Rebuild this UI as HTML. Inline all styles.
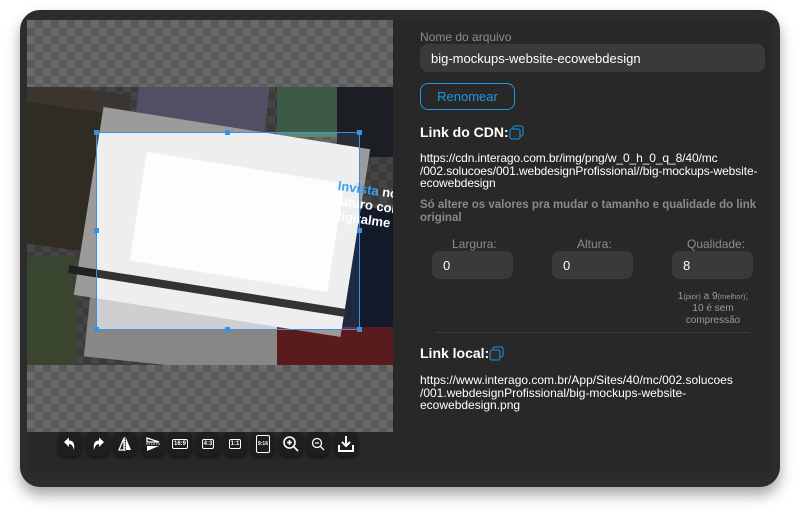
<!DOCTYPE html>
<html><head><meta charset="utf-8"><style>
*{box-sizing:border-box;margin:0;padding:0}
body{width:800px;height:514px;background:#fff;font-family:"Liberation Sans",sans-serif;position:relative;overflow:hidden}
.panel{position:absolute;left:20px;top:10px;width:760px;height:477px;background:#2c2c2c;border-radius:20px;box-shadow:0 8px 14px rgba(0,0,0,.35)}
.inner{position:absolute;left:27px;top:20px;width:746px;height:453px;background:#282828}
.canvas{position:absolute;left:27px;top:20px;width:366px;height:412px;overflow:hidden;
background-color:#6a6a6a;background-image:linear-gradient(45deg,#5a5a5a 25%,transparent 25%,transparent 75%,#5a5a5a 75%),linear-gradient(45deg,#5a5a5a 25%,transparent 25%,transparent 75%,#5a5a5a 75%);background-size:16px 16px;background-position:0 0,8px 8px}
.img{position:absolute;left:0;top:67px;width:366px;height:278px;overflow:hidden}
.b{position:absolute}
.dim{position:absolute;left:0;top:67px;width:366px;height:278px;background:rgba(0,0,0,.35)}
.crop{position:absolute;left:69px;top:112px;width:264px;height:198px;border:1.5px solid #3d8fe6}
.h{position:absolute;width:5px;height:5px;background:#3d8fe6}
.tb{position:absolute;top:432px;height:24px;width:24px;background:#1e1e1e;border-radius:7px;box-shadow:0 2px 3px rgba(0,0,0,.5);display:flex;align-items:center;justify-content:center;color:#fff;font-size:6px;font-weight:bold}
.tb span{border:1.3px solid #fff;border-radius:2px;padding:1px 1px;line-height:6px}
.lbl{position:absolute;color:#8d8d8d;font-size:12px}
.inp{position:absolute;background:#3a3a3c;border-radius:8px;color:#fff;font-size:13px;padding-left:11px;display:flex;align-items:center}
.t{position:absolute;color:#fff;font-size:12px;line-height:12.5px}
.hd{position:absolute;color:#fff;font-size:14px;font-weight:bold}
.cp{display:inline-block;vertical-align:-3px;width:15px;height:15px;position:relative}
</style></head><body>
<div class="panel"></div>
<div class="inner"></div>
<div class="canvas">
 <div class="img">
  <div class="b" style="left:-20px;top:0;width:120px;height:70px;background:#5c5048;transform:rotate(8deg)"></div>
  <div class="b" style="left:-10px;top:20px;width:80px;height:140px;background:#4a4236;transform:rotate(8deg)"></div>
  <div class="b" style="left:-10px;top:170px;width:60px;height:110px;background:#5a6a4a"></div>
  <div class="b" style="left:110px;top:-10px;width:130px;height:60px;background:#7c7a9a;transform:rotate(6deg)"></div>
  <div class="b" style="left:250px;top:-10px;width:60px;height:60px;background:#5c8a6a"></div>
  <div class="b" style="left:310px;top:0;width:60px;height:70px;background:#2a2e36"></div>
  <div class="b" style="left:290px;top:120px;width:90px;height:140px;background:#1c2940;transform:rotate(8deg)"></div>
  <div class="b" style="left:60px;top:210px;width:200px;height:70px;background:#cfcfd2;transform:rotate(6deg)"></div>
  <div class="b" style="left:250px;top:240px;width:120px;height:40px;background:#8a2a30"></div>
  <div class="b" style="left:60px;top:40px;width:270px;height:190px;background:#eeeeee;transform:rotate(9deg)"></div>
  <div class="b" style="left:110px;top:80px;width:200px;height:110px;background:#fdfdfd;transform:rotate(9deg)"></div>
  <div class="b" style="left:40px;top:200px;width:280px;height:8px;background:#333;transform:rotate(9deg)"></div>
 </div>
 <div class="dim" style="height:45px"></div>
 <div class="dim" style="top:112px;width:69px;height:198px"></div>
 <div class="dim" style="top:112px;left:333px;width:33px;height:198px"></div>
 <div class="dim" style="top:310px;height:35px"></div>
 <div style="position:absolute;left:312px;top:158px;color:#fff;font-weight:bold;font-size:13px;transform:rotate(8deg);transform-origin:0 0;line-height:15px;white-space:nowrap"><span style="color:#3aa0e8">Invista</span> no<br>futuro cono<br>digitalme</div>
 <div class="crop"></div>
 <div class="h" style="left:67px;top:110px"></div><div class="h" style="left:198px;top:110px"></div><div class="h" style="left:330px;top:110px"></div>
 <div class="h" style="left:67px;top:208px"></div><div class="h" style="left:330px;top:208px"></div>
 <div class="h" style="left:67px;top:307px"></div><div class="h" style="left:198px;top:307px"></div><div class="h" style="left:330px;top:307px"></div>
</div>
<div class="tb" style="left:58px"><svg width="16" height="16" viewBox="0 0 16 16"><path d="M2 6L7 1.5V4.5C11 4.5 13 7 12 14C11 10 9.5 8 7 8V11Z" fill="#fff"/></svg></div>
<div class="tb" style="left:86px"><svg width="16" height="16" viewBox="0 0 16 16"><path d="M14 6L9 1.5V4.5C5 4.5 3 7 4 14C5 10 6.5 8 9 8V11Z" fill="#fff"/></svg></div>
<div class="tb" style="left:113px"><svg width="16" height="16" viewBox="0 0 16 16"><path d="M7 2L2 14H7Z" fill="none" stroke="#fff" stroke-width="1.3"/><path d="M9 2L14 14H9Z" fill="#fff"/><path d="M8 1V15" stroke="#fff" stroke-dasharray="1.5 1"/></svg></div>
<div class="tb" style="left:141px"><svg width="16" height="16" viewBox="0 0 16 16"><path d="M2 2L14 6H2Z" fill="none" stroke="#fff" stroke-width="1.3"/><path d="M2 10L14 10L2 15Z" fill="#fff"/><path d="M1 8H15" stroke="#fff" stroke-dasharray="1.5 1"/></svg></div>
<div class="tb" style="left:168px"><span>16:9</span></div>
<div class="tb" style="left:196px"><span>4:3</span></div>
<div class="tb" style="left:223px"><span>1:1</span></div>
<div class="tb" style="left:251px"><span style="padding:5px 1px;font-size:5px">9:16</span></div>
<div class="tb" style="left:279px"><svg width="18" height="18" viewBox="0 0 18 18"><circle cx="7.5" cy="7.5" r="5.5" fill="none" stroke="#fff" stroke-width="1.6"/><path d="M11.5 11.5L16 16M7.5 5V10M5 7.5H10" stroke="#fff" stroke-width="1.6"/></svg></div>
<div class="tb" style="left:306px"><svg width="16" height="16" viewBox="0 0 16 16"><circle cx="7" cy="7" r="4.5" fill="none" stroke="#fff" stroke-width="1.3"/><path d="M10.3 10.3L14 14M5 7H9" stroke="#fff" stroke-width="1.3"/></svg></div>
<div class="tb" style="left:334px"><svg width="18" height="18" viewBox="0 0 18 18"><path d="M9 1V11M5 7L9 11L13 7" fill="none" stroke="#fff" stroke-width="2"/><path d="M2 10V16H16V10" fill="none" stroke="#fff" stroke-width="2"/></svg></div>

<div class="lbl" style="left:420px;top:30px">Nome do arquivo</div>
<div class="inp" style="left:420px;top:44px;width:345px;height:28px">big-mockups-website-ecowebdesign</div>
<div style="position:absolute;left:420px;top:83px;width:95px;height:27px;border:1.3px solid #1d9ae0;border-radius:8px;color:#1d9ae0;font-size:13px;display:flex;align-items:center;justify-content:center">Renomear</div>
<div class="hd" style="left:420px;top:124px">Link do CDN:<span class="cp"><svg width="15" height="15" viewBox="0 0 15 15"><rect x="4" y="1" width="10" height="10" rx="2" fill="none" stroke="#1d7fc0" stroke-width="1.3"/><rect x="1" y="4" width="10" height="10" rx="2" fill="#2c2c2c" stroke="#1d7fc0" stroke-width="1.3"/></svg></span></div>
<div class="t" style="left:420px;top:152px;letter-spacing:-0.1px">https://cdn.interago.com.br/img/png/w_0_h_0_q_8/40/mc<br>/002.solucoes/001.webdesignProfissional//big-mockups-website-<br>ecowebdesign</div>
<div class="t" style="left:420px;top:199px;color:#8a8a8a;font-weight:bold;font-size:11.5px">Só altere os valores pra mudar o tamanho e qualidade do link<br>original</div>
<div class="lbl" style="left:452px;top:237px">Largura:</div>
<div class="lbl" style="left:577px;top:237px">Altura:</div>
<div class="lbl" style="left:687px;top:237px">Qualidade:</div>
<div class="inp" style="left:432px;top:251px;width:81px;height:28px">0</div>
<div class="inp" style="left:552px;top:251px;width:81px;height:28px">0</div>
<div class="inp" style="left:672px;top:251px;width:81px;height:28px">8</div>
<div style="position:absolute;left:668px;top:291px;width:90px;text-align:center;color:#9a9a9a;font-size:10px;line-height:12px">1<span style="font-size:7.5px">(pior)</span> a 9<span style="font-size:7.5px">(melhor)</span>;<br>10 é sem<br>compressão</div>
<div style="position:absolute;left:435px;top:332px;width:315px;height:1px;background:#3a3a3a"></div>
<div class="hd" style="left:420px;top:345px">Link local:<span class="cp"><svg width="15" height="15" viewBox="0 0 15 15"><rect x="4" y="1" width="10" height="10" rx="2" fill="none" stroke="#1d7fc0" stroke-width="1.3"/><rect x="1" y="4" width="10" height="10" rx="2" fill="#2c2c2c" stroke="#1d7fc0" stroke-width="1.3"/></svg></span></div>
<div class="t" style="left:420px;top:374px">https://www.interago.com.br/App/Sites/40/mc/002.solucoes<br>/001.webdesignProfissional/big-mockups-website-<br>ecowebdesign.png</div>
</body></html>
